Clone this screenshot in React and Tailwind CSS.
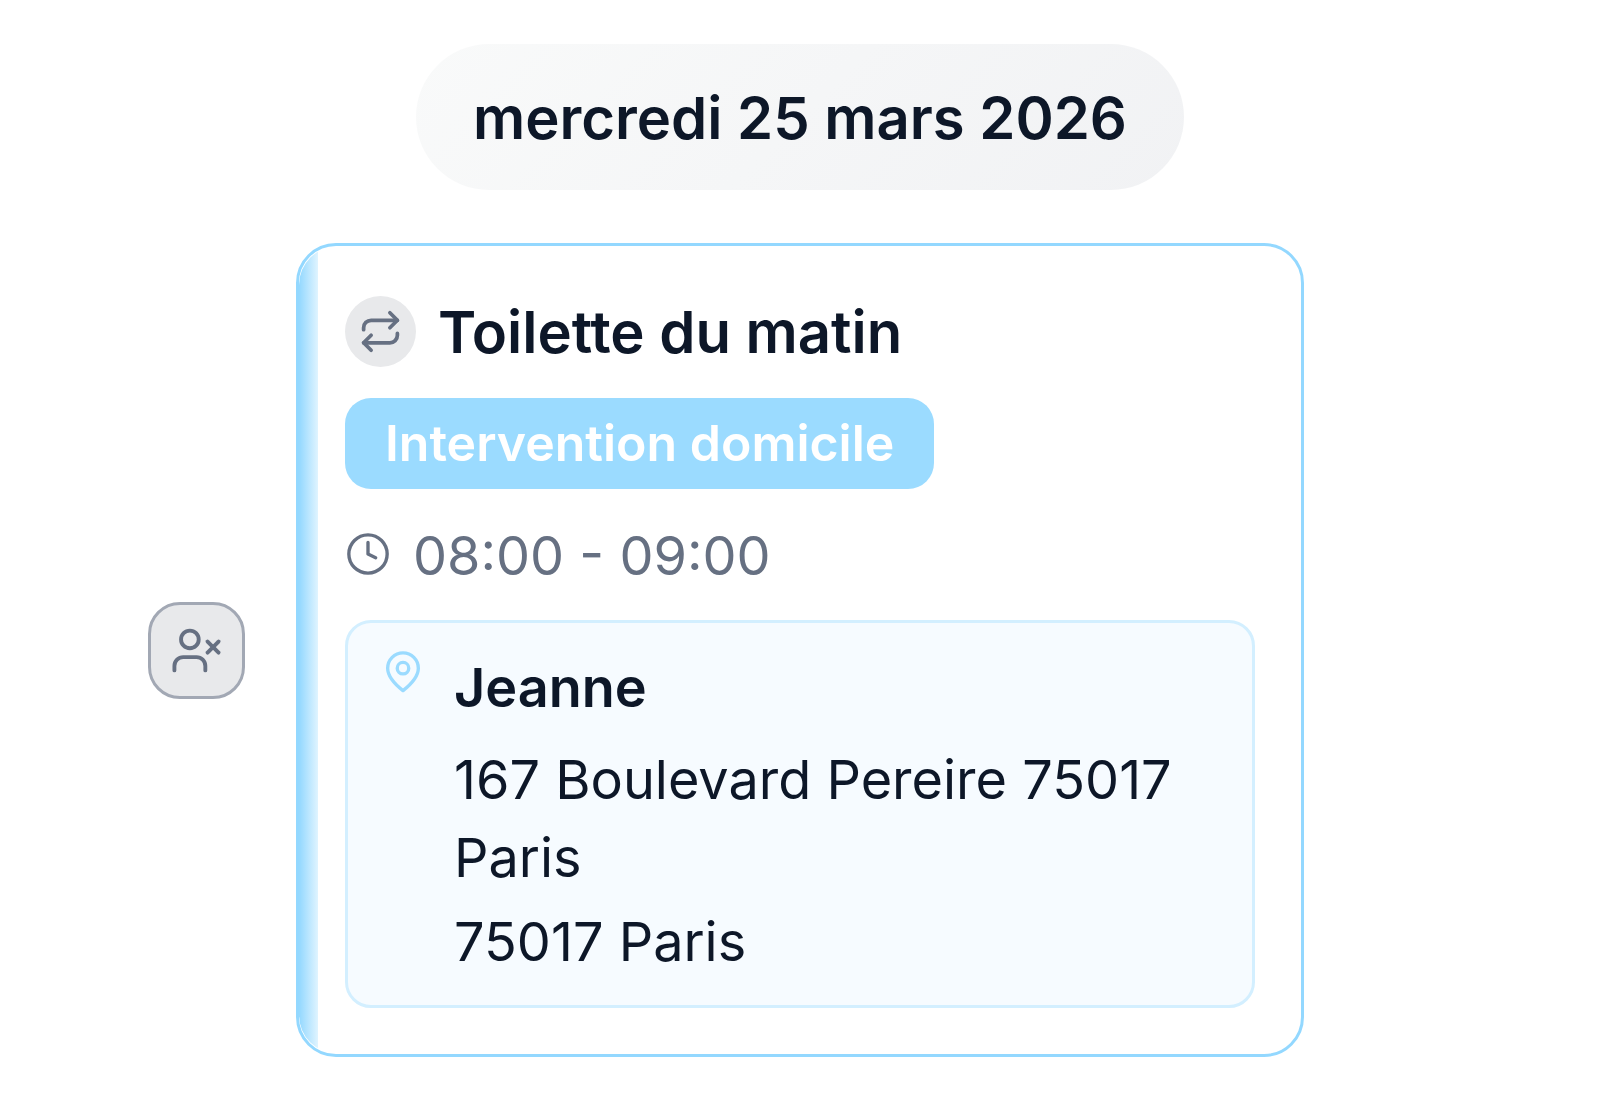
import { Clock, Repeat, UserX } from 'lucide-react'

const event = {
  date: 'mercredi 25 mars 2026',
  title: 'Toilette du matin',
  type: 'Intervention domicile',
  start: '08:00',
  end: '09:00',
  client: 'Jeanne',
  address: '167 Boulevard Pereire 75017 Paris',
  city: '75017 Paris',
}

function PinIcon({ className }) {
  return (
    <svg className={className} viewBox="0 0 24 24" fill="none" stroke="currentColor" strokeWidth="1.75" strokeLinecap="round" strokeLinejoin="round" aria-hidden="true">
      <path d="M20 10c0 4.4-3.6 8.2-8 11.700-4.4-3.500-8-7.300-8-11.700a8 8 0 0 1 16 0Z" />
      <circle cx="12" cy="10" r="3" />
    </svg>
  )
}

function EventCard({ event }) {
  return (
    <article className="relative overflow-hidden rounded-[40px] border-3 border-[#93d8ff] bg-white px-[46px] pt-[50px] pb-[46px]">
      {/* Colored edge */}
      <div className="absolute inset-0 rounded-l-[39px] bg-[linear-gradient(to_right,#93d8ff_0px,#e0f4ff_19px,transparent_19px)]"></div>

      <div className="relative">
        <div className="flex items-center gap-[22px]">
          <span className="flex size-[71px] shrink-0 items-center justify-center rounded-full bg-[#e8e9eb] text-[#667082]">
            <Repeat size={45} strokeWidth={2} />
          </span>
          <h2 className="text-[58px] leading-[70px] font-semibold">{event.title}</h2>
        </div>

        <span className="mt-[31px] inline-block rounded-[26px] bg-[#9bdbff] px-10 py-[13px] text-[50px] leading-[65px] font-semibold text-white">
          {event.type}
        </span>

        <p className="mt-[26px] flex items-center gap-[22px] text-[54px] leading-[78px] text-[#667082]">
          <Clock size={46} strokeWidth={1.75} />
          <time className="pt-1 leading-[74px]">{event.start} - {event.end}</time>
        </p>

        <div className="mt-[27px] flex gap-[28px] rounded-[26px] border-3 border-[#d3efff] bg-[#f6fbff] pt-[26px] pr-8 pb-6 pl-8">
          <PinIcon className="size-[46px] shrink-0 text-[#9bdbff]" />
          <address className="text-[54px] leading-[78px] not-italic">
            <p className="font-semibold">{event.client}</p>
            <p className="mt-3.5">{event.address}</p>
            <p className="mt-1.5">{event.city}</p>
          </address>
        </div>
      </div>
    </article>
  )
}

export default function App() {
  return (
    <main className="flex min-h-screen flex-col items-center bg-white pt-[44px] font-['Inter',sans-serif] text-[#0d1728]">
      <h1 className="rounded-full bg-linear-135 from-[#f9fafa] to-[#f1f2f4] px-[57px] pt-[35px] pb-[33px] text-[58px] leading-[78px] font-semibold">
        {event.date}
      </h1>

      <div className="mt-[53px] grid w-full grid-cols-[1fr_minmax(0,1008px)_1fr] items-center">
        <button type="button" title="Non assigné" className="mr-[51px] flex size-[97px] items-center justify-center justify-self-end rounded-[32px] border-3 border-[#a2a8b4] bg-[#e8e9eb] text-[#667082]">
          <UserX size={53} strokeWidth={1.75} />
        </button>
        <EventCard event={event} />
      </div>
    </main>
  )
}
